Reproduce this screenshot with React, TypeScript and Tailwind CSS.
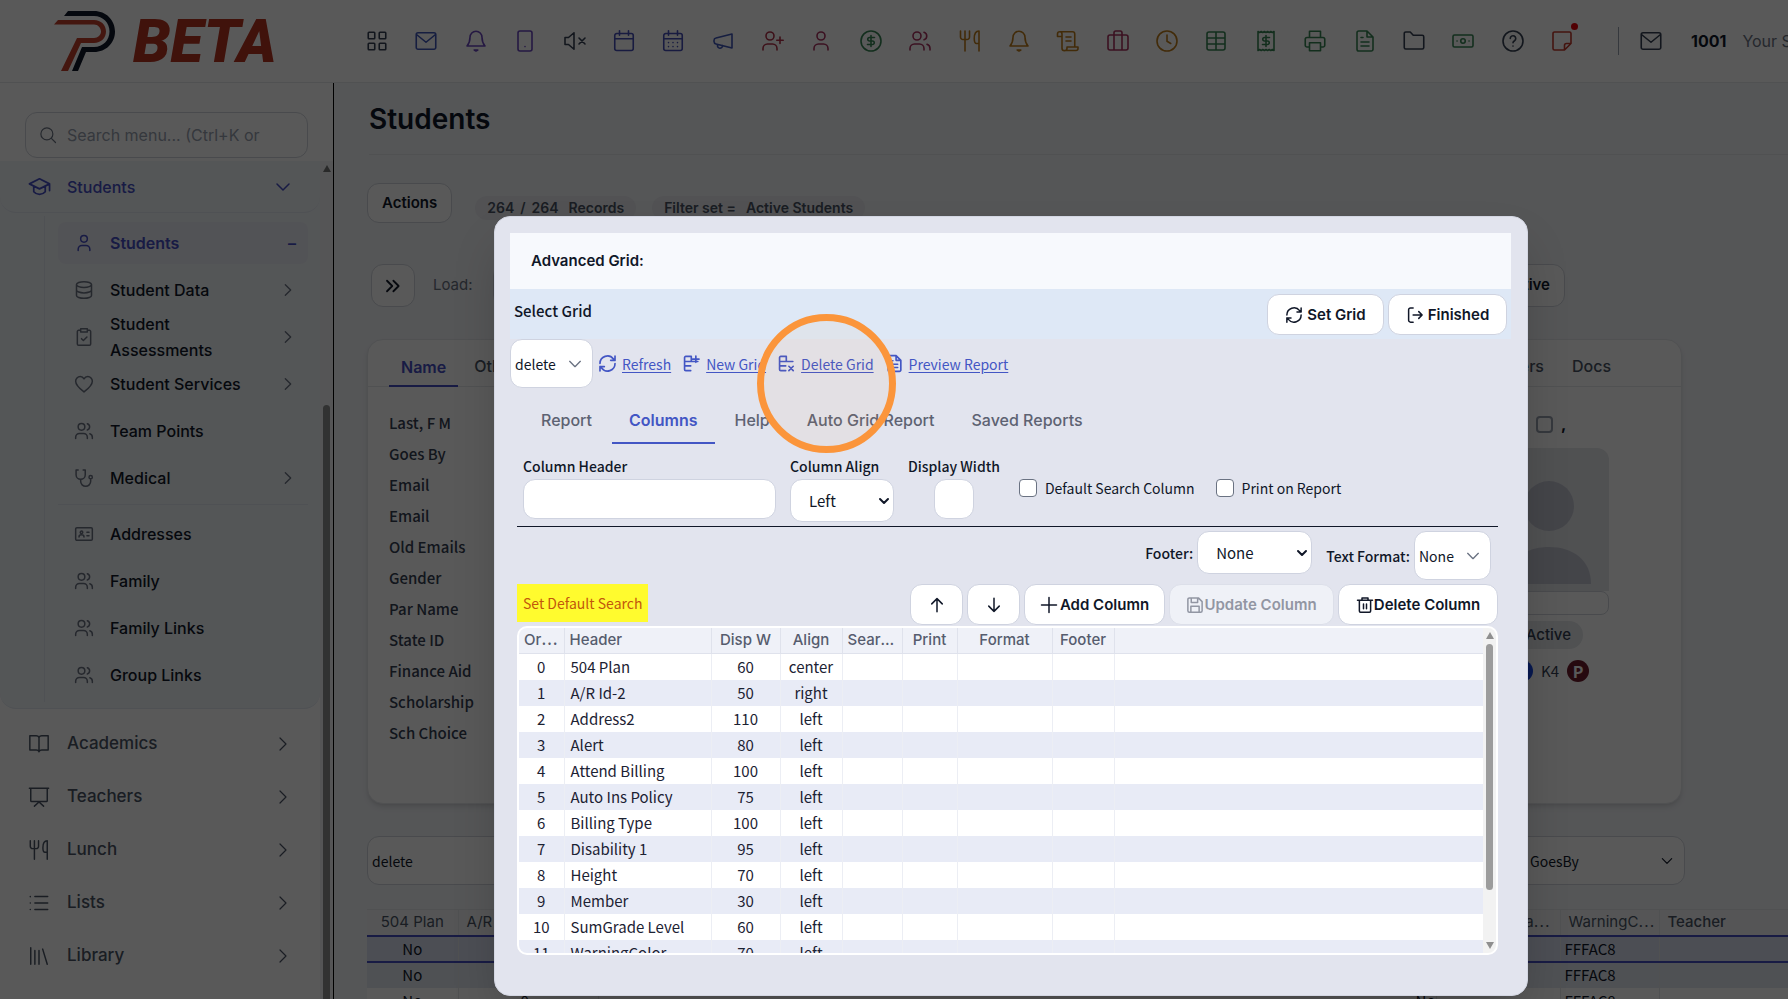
import { useState, type ReactNode } from 'react';

const SANS = "font-['Inter','Noto_Sans_CJK_SC',sans-serif]";
const SOURCE = "font-['Noto_Sans_CJK_SC','Noto_Sans',sans-serif]";

const dollar = 'M15.5 8.5h-5a1.75 1.75 0 0 0 0 3.5h3a1.75 1.75 0 0 1 0 3.5h-5M12 6.5v11';
const userBody = 'M5 21v-1.5a4.5 4.5 0 0 1 4.5-4.5h5a4.5 4.5 0 0 1 4.5 4.5V21';
const bell = 'M12 2.25A6 6 0 0 1 18 8.2c0 4.6 1.3 6.8 3 8.8H3c1.7-2 3-4.2 3-8.8a6 6 0 0 1 6-5.95zM10.2 21h3.6l-1.8 1z';
const calendar = 'M4.75 4.5h14.5a2 2 0 0 1 2 2v13a2 2 0 0 1-2 2H4.75a2 2 0 0 1-2-2v-13a2 2 0 0 1 2-2zM2.75 9.75h18.5M7.5 1.75v4.5M16.5 1.75v4.5';
const rows = 'M4.75 3h7v6.5M4.75 3a1.5 1.5 0 0 0-1.5 1.5v15a1.5 1.5 0 0 0 1.5 1.5H11M3.25 9.5H20M3.25 15H11';

const icons: Record<string, string> = {
  grid: 'M4 3.25h5a.75.75 0 0 1 .75.75v5a.75.75 0 0 1-.75.75H4A.75.75 0 0 1 3.25 9V4A.75.75 0 0 1 4 3.25zM15 3.25h5a.75.75 0 0 1 .75.75v5a.75.75 0 0 1-.75.75h-5a.75.75 0 0 1-.75-.75V4a.75.75 0 0 1 .75-.75zM4 14.25h5a.75.75 0 0 1 .75.75v5a.75.75 0 0 1-.75.75H4a.75.75 0 0 1-.75-.75v-5a.75.75 0 0 1 .75-.75zM15 14.25h5a.75.75 0 0 1 .75.75v5a.75.75 0 0 1-.75.75h-5a.75.75 0 0 1-.75-.75v-5a.75.75 0 0 1 .75-.75z',
  mail: 'M4 3.75h16a1.75 1.75 0 0 1 1.75 1.75v13A1.75 1.75 0 0 1 20 20.25H4a1.75 1.75 0 0 1-1.75-1.75v-13A1.75 1.75 0 0 1 4 3.75zM2.5 5.5l9.5 7.75L21.5 5.5',
  bell,
  phone: 'M7 2h10a2 2 0 0 1 2 2v16a2 2 0 0 1-2 2H7a2 2 0 0 1-2-2V4a2 2 0 0 1 2-2zM12 17.5v.1',
  mute: 'M2 8.5h3.5L11 3.75v16.5L5.5 15.5H2zM16 9l6 6M22 9l-6 6',
  calendar,
  calendarDays: calendar + 'M7.5 13.5v.1M12 13.5v.1M16.5 13.5v.1M7.5 17.5v.1M12 17.5v.1M16.5 17.5v.1',
  megaphone: 'M21 5v14L5 15a2.5 2.5 0 0 1-2-2.4v-1.2A2.5 2.5 0 0 1 5 9zM6.5 15.5v1a2.5 2.5 0 0 0 5 .5v-.4',
  userPlus: 'M14 7a4 4 0 1 1-8 0 4 4 0 0 1 8 0zM3 21v-1.5a4.5 4.5 0 0 1 4.5-4.5h5a4.5 4.5 0 0 1 4.5 4.5V21M20 8v6.5M16.75 11.25h6.5',
  user: 'M16 7a4 4 0 1 1-8 0 4 4 0 0 1 8 0z' + userBody,
  dollarCircle: 'M22 12a10 10 0 1 1-20 0 10 10 0 0 1 20 0z' + dollar,
  users: 'M13 7a4 4 0 1 1-8 0 4 4 0 0 1 8 0zM2 21v-1.5a4.5 4.5 0 0 1 4.5-4.5h5a4.5 4.5 0 0 1 4.5 4.5V21M16 3.2a4 4 0 0 1 0 7.6M19 15.3a4.5 4.5 0 0 1 3 4.2V21',
  utensils: 'M2.5 2v6a2.5 2.5 0 0 0 2.5 2.5h4A2.5 2.5 0 0 0 11.5 8V2M7 2v20M21 22V2c-3 0-4.75 3-4.75 7.5 0 3.5.75 5 2.25 5H21',
  scroll: 'M8.5 21.5H20a2 2 0 0 0 2-2V18H11v1.25a2.5 2.5 0 0 1-5 0V5a2.25 2.25 0 1 0-4.5 0v2.5H6M3.75 2.75H16.5A2.25 2.25 0 0 1 18.75 5v13M10 8h5M10 12h5',
  suitcase: 'M4 6h16a2 2 0 0 1 2 2v11a2 2 0 0 1-2 2H4a2 2 0 0 1-2-2V8a2 2 0 0 1 2-2zM8 21V3.75A1.75 1.75 0 0 1 9.75 2h4.5A1.75 1.75 0 0 1 16 3.75V21',
  clock: 'M22 12a10 10 0 1 1-20 0 10 10 0 0 1 20 0zM12 6v6.25l3.75 2.25',
  sheet: 'M5 3h14a2 2 0 0 1 2 2v14a2 2 0 0 1-2 2H5a2 2 0 0 1-2-2V5a2 2 0 0 1 2-2zM3 9h18M3 15h18M12 3v18',
  receipt: 'M4 2.5l1.6 1 1.6-1 1.6 1 1.6-1 1.6 1 1.6-1 1.6 1 1.6-1 1.6 1 1.6-1v19l-1.6-1-1.6 1-1.6-1-1.6 1-1.6-1-1.6 1-1.6-1-1.6 1-1.6-1-1.6 1z' + dollar,
  printer: 'M6.5 8.5V2.25h11V8.5M6.5 18H4a1.75 1.75 0 0 1-1.75-1.75v-6A1.75 1.75 0 0 1 4 8.5h16a1.75 1.75 0 0 1 1.75 1.75v6A1.75 1.75 0 0 1 20 18h-2.5M6.5 13.75h11v8h-11z',
  file: 'M14 2H5.75A1.75 1.75 0 0 0 4 3.75v16.5C4 21.2 4.8 22 5.75 22h12.5A1.75 1.75 0 0 0 20 20.25V8zM14 2v6h6M8 8.5h2M8 13h8M8 17h8',
  folder: 'M2.25 4.5A1.5 1.5 0 0 1 3.75 3h4.5l3 3.25h9a1.5 1.5 0 0 1 1.5 1.5V18.5a1.5 1.5 0 0 1-1.5 1.5H3.75a1.5 1.5 0 0 1-1.5-1.5z',
  cash: 'M3.5 6h17A1.5 1.5 0 0 1 22 7.5v9a1.5 1.5 0 0 1-1.5 1.5h-17A1.5 1.5 0 0 1 2 16.5v-9A1.5 1.5 0 0 1 3.5 6zM14.25 12a2.25 2.25 0 1 1-4.5 0 2.25 2.25 0 0 1 4.5 0zM6 12h.1M18 12h.1',
  help: 'M22 12a10 10 0 1 1-20 0 10 10 0 0 1 20 0zM9.25 9.5a2.75 2.75 0 1 1 4.3 2.25C12.5 12.4 12 12.75 12 13.75M12 17v.1',
  note: 'M4.5 3h15A1.5 1.5 0 0 1 21 4.5V14.5L14.5 21h-10A1.5 1.5 0 0 1 3 19.5v-15A1.5 1.5 0 0 1 4.5 3zM14.5 21v-4.5a2 2 0 0 1 2-2H21',
  search: 'M18.5 10.5a8 8 0 1 1-16 0 8 8 0 0 1 16 0zM16.5 16.5L22 22',
  cap: 'M12 4L1.5 9.25 12 14.5l10.5-5.25zM22.5 9.25v7M6 12v5.5c1.5 1.75 3.6 2.75 6 2.75s4.5-1 6-2.75V12',
  database: 'M21 5.5c0 1.9-4 3.5-9 3.5S3 7.4 3 5.5 7 2 12 2s9 1.6 9 3.5zM3 5.5v13C3 20.4 7 22 12 22s9-1.6 9-3.5v-13M3 12c0 1.9 4 3.5 9 3.5s9-1.6 9-3.5',
  clipboard: 'M8 4H5.5A1.5 1.5 0 0 0 4 5.5v15A1.5 1.5 0 0 0 5.5 22h13a1.5 1.5 0 0 0 1.5-1.5v-15A1.5 1.5 0 0 0 18.5 4H16M8 2h8v4H8zM9 14l2.25 2.25L15.5 12',
  heart: 'M12 21.5C6 17 2 13.2 2 8.7A5.6 5.6 0 0 1 7.5 3C9.5 3 11 4 12 5.75 13 4 14.5 3 16.5 3A5.6 5.6 0 0 1 22 8.7c0 4.5-4 8.3-10 12.8z',
  stethoscope: 'M5 2.5H2.5V8a5.5 5.5 0 0 0 11 0V2.5H11M8 13.5V16a6 6 0 0 0 12 0v-3M22 11a2 2 0 1 1-4 0 2 2 0 0 1 4 0z',
  idCard: 'M3.5 4.5h17A1.5 1.5 0 0 1 22 6v12a1.5 1.5 0 0 1-1.5 1.5h-17A1.5 1.5 0 0 1 2 18V6a1.5 1.5 0 0 1 1.5-1.5zM10.5 10a1.5 1.5 0 1 1-3 0 1.5 1.5 0 0 1 3 0zM6 15.5c0-1.5 1.2-2.5 3-2.5s3 1 3 2.5M15.5 10H18M15.5 14H18',
  book: 'M12 5v15M12 5c-.5-1.2-1.5-2-3-2H2v15.5h7c1.5 0 2.5.5 3 2 .5-1.5 1.5-2 3-2h7V3h-7c-1.5 0-2.5.8-3 2z',
  presentation: 'M1.5 2.5h21M3 2.5V16a1 1 0 0 0 1 1h16a1 1 0 0 0 1-1V2.5M7 22l5-4.5 5 4.5',
  list: 'M2.5 5v.1M2.5 12v.1M2.5 19v.1M7.5 5h14M7.5 12h14M7.5 19h14',
  library: 'M3 3v18M7.5 6v15M12 6v15M16 4.5L21 21',
  refresh: 'M2.5 12a9.5 9.5 0 0 1 17-5.8L21.5 8M21.5 2.5V8H16M21.5 12a9.5 9.5 0 0 1-17 5.8L2.5 16M2.5 21.5V16H8',
  rowsAdd: rows + 'M17.5 2.5v8M13.5 6.5h8',
  rowsDelete: rows + 'M15 15.5l5.5 5.5M20.5 15.5L15 21',
  exit: 'M9.5 2.5H6A2.5 2.5 0 0 0 3.5 5v14A2.5 2.5 0 0 0 6 21.5h3.5M9.5 12h12M17 7.5l4.5 4.5-4.5 4.5',
  up: 'M12 21V3.5M5 10.5l7-7 7 7',
  down: 'M12 3v17.5M5 13.5l7 7 7-7',
  plus: 'M12 2v20M2 12h20',
  save: 'M4.5 2.5h12l5 5v12a2 2 0 0 1-2 2h-15a2 2 0 0 1-2-2v-15a2 2 0 0 1 2-2zM7 2.5v6h8.5v-6M6.5 21.5v-8h11v8',
  trash: 'M2 5.5h20M8 5.5V2.5h8v3M4.5 5.5V20A1.5 1.5 0 0 0 6 21.5h12a1.5 1.5 0 0 0 1.5-1.5V5.5M10 10.5v6.5M14 10.5v6.5',
  chevronDown: 'M4 8l8 8 8-8',
  chevronRight: 'M8 4l8 8-8 8',
  double: 'M4 5l7 7-7 7M12.5 5l7 7-7 7',
};

interface IconProps {
  name: string;
  className?: string;
  weight?: number;
}

const Icon = ({ name, className = 'size-6', weight = 1.6 }: IconProps) => (
  <svg className={`shrink-0 ${className}`} viewBox="0 0 24 24" fill="none" stroke="currentColor" strokeWidth={weight} strokeLinecap="round" strokeLinejoin="round" aria-hidden="true">
    <path d={icons[name]} />
  </svg>
);

const toolbar = [
  ['grid', 'text-gray-700'],
  ['mail', 'text-[#3f56b8]'],
  ['bell', 'text-[#6a47bd]'],
  ['phone', 'text-[#6a47bd]'],
  ['mute', 'text-gray-700'],
  ['calendar', 'text-[#454eb8]'],
  ['calendarDays', 'text-[#454eb8]'],
  ['megaphone', 'text-[#3f56b8]'],
  ['userPlus', 'text-[#b03048]'],
  ['user', 'text-[#a8325f]'],
  ['dollarCircle', 'text-[#388555]'],
  ['users', 'text-[#a8325f]'],
  ['utensils', 'text-[#bd7c1c]'],
  ['bell', 'text-[#bd7c1c]'],
  ['scroll', 'text-[#bd7c1c]'],
  ['suitcase', 'text-[#a8325f]'],
  ['clock', 'text-[#bd7c1c]'],
  ['sheet', 'text-[#388555]'],
  ['receipt', 'text-[#388555]'],
  ['printer', 'text-[#388555]'],
  ['file', 'text-[#388555]'],
  ['folder', 'text-gray-700'],
  ['cash', 'text-[#388555]'],
  ['help', 'text-gray-700'],
  ['note', 'text-[#c23a2c]'],
];

const studentMenu = [
  { icon: 'database', label: 'Student Data', more: true },
  { icon: 'clipboard', label: 'Student Assessments', more: true },
  { icon: 'heart', label: 'Student Services', more: true },
  { icon: 'users', label: 'Team Points', more: false },
  { icon: 'stethoscope', label: 'Medical', more: true },
];

const linkMenu = [
  { icon: 'idCard', label: 'Addresses', more: false },
  { icon: 'users', label: 'Family', more: false },
  { icon: 'users', label: 'Family Links', more: false },
  { icon: 'users', label: 'Group Links', more: false },
];

const mainMenu = [
  ['book', 'Academics'],
  ['presentation', 'Teachers'],
  ['utensils', 'Lunch'],
  ['list', 'Lists'],
  ['library', 'Library'],
];

const fields = ['Last, F M', 'Goes By', 'Email', 'Email', 'Old Emails', 'Gender', 'Par Name', 'State ID', 'Finance Aid', 'Scholarship', 'Sch Choice'];

const gridRows = [
  ['504 Plan', 60, 'center'],
  ['A/R Id-2', 50, 'right'],
  ['Address2', 110, 'left'],
  ['Alert', 80, 'left'],
  ['Attend Billing', 100, 'left'],
  ['Auto Ins Policy', 75, 'left'],
  ['Billing Type', 100, 'left'],
  ['Disability 1', 95, 'left'],
  ['Height', 70, 'left'],
  ['Member', 30, 'left'],
  ['SumGrade Level', 60, 'left'],
  ['WarningColor', 70, 'left'],
];

// shortened column title, with the dots at mid height
const Cut = ({ children }: { children: string }) => (
  <>{children}<span className={`${SOURCE} leading-none`}>…</span></>
);

const SubItem = ({ icon, label, more }: { icon: string; label: string; more: boolean }) => (
  <a href="#" className="flex h-[42px] items-center pr-3 pl-4 text-base leading-[26px] font-medium text-gray-900">
    <Icon name={icon} className="size-5 text-gray-500" weight={1.8} />
    <span className="ml-4 w-[140px]">{label}</span>
    {more && <Icon name="chevronRight" className="ml-auto size-4 text-gray-500" weight={2} />}
  </a>
);

const Header = () => (
  <header className="flex h-[83px] shrink-0 items-center border-b border-gray-200 bg-white">
    <div className="flex w-[365px] shrink-0 items-center pl-[54px]">
      <svg className="h-[60px] w-[62px]" viewBox="0 0 62 60" aria-hidden="true">
        <path d="M14 0h26c12 0 21 9 21 20.5S52 41 40 41h-8L24 60h-6l10-24h12c9 0 15.500-7 15.500-15.500S49 5 40 5H10z" fill="#0f172a" />
        <path d="M4 9h36c7 0 12 5 12 11.500S47 32 40 32H27L14 60H7l16-33h17c4 0 7-3 7-6.500S44 13.500 40 13.500H0z" fill="#c2412d" />
      </svg>
      <span className="ml-[17px] pt-0.5 font-['Roboto',sans-serif] text-[60px] leading-[60px] font-black text-[#b83422] italic">BETA</span>
    </div>
    <nav aria-label="Shortcuts" className="flex flex-1 items-center justify-between">
      {toolbar.map(([name, color], i) => (
        <button key={i} type="button" aria-label={name} className={`relative ${color}`}>
          <Icon name={name} />
          {name === 'note' && <span className="absolute -top-1.5 -right-1 size-[7px] rounded-full bg-red-600" />}
        </button>
      ))}
    </nav>
    <div className="flex w-[214px] shrink-0 items-center overflow-hidden pl-11">
      <div className="h-7 w-px shrink-0 bg-gray-400" />
      <Icon name="mail" className="ml-5 size-6 text-gray-700" />
      <span className="ml-7 text-base font-bold">1001</span>
      <span className="ml-4 text-base whitespace-nowrap text-gray-500">Your School</span>
    </div>
  </header>
);

const Sidebar = () => (
  <aside className="flex w-[334px] shrink-0 flex-col border-r border-black bg-white">
    <div className="px-[25px] pt-[29px] pb-[3px]">
      <label className="flex h-[46px] items-center rounded-xl border border-gray-300 pl-[13px] text-gray-500">
        <Icon name="search" className="size-[18px]" />
        <input aria-label="Search menu" className="ml-2.5 w-[215px] text-base placeholder:text-gray-400" placeholder="Search menu... (Ctrl+K or" />
      </label>
    </div>
    <div className="flex min-h-0 flex-1">
      <div className="min-w-0 flex-1 overflow-hidden">
        <div className="rounded-b-2xl border-b border-slate-200 bg-slate-100 pb-1.5">
          <a href="#" className="flex h-[52px] items-center rounded-b-2xl border-b border-slate-200 pr-7 pl-7 text-base font-medium text-[#454ec4]">
            <Icon name="cap" className="size-[23px]" weight={1.8} />
            <span className="ml-4">Students</span>
            <Icon name="chevronDown" className="ml-auto size-[18px]" weight={2} />
          </a>
          <div className="mt-[3px] ml-11 border-l border-slate-200 pt-1.5 pr-3 pb-1.5 pl-[13px]">
            <div className="flex flex-col gap-[5px]">
              <a href="#" className="flex h-[42px] items-center rounded-lg bg-[#ebedf6] pr-3 pl-4 text-base font-semibold text-[#454ec4]">
                <Icon name="user" className="size-5" weight={1.8} />
                <span className="ml-4">Students</span>
                <span className="ml-auto">–</span>
              </a>
              {studentMenu.map((item) => <SubItem key={item.label} {...item} />)}
            </div>
            <hr className="mt-[5px] mb-2 border-slate-200" />
            <div className="flex flex-col gap-[5px]">
              {linkMenu.map((item) => <SubItem key={item.label} {...item} />)}
            </div>
          </div>
        </div>
        <div className="pt-2">
          {mainMenu.map(([icon, label]) => (
            <a key={label} href="#" className="flex h-[53px] items-center pr-7 pl-7 text-[17px] font-medium text-gray-600">
              <Icon name={icon} className="size-[22px]" />
              <span className="ml-[17px]">{label}</span>
              <Icon name="chevronRight" className="ml-auto size-[18px]" />
            </a>
          ))}
        </div>
      </div>
      <div className="flex w-[13px] flex-col items-center bg-gray-100">
        <svg className="mt-1 size-2" viewBox="0 0 8 8" aria-hidden="true"><path d="M4 0l4 7H0z" fill="#777" /></svg>
        <div className="mt-[232px] w-[7px] flex-1 rounded-t-full bg-[#8f8f8f]" />
      </div>
    </div>
  </aside>
);

const pageTable = 'border-r border-gray-200 font-normal';

const StudentsPage = () => (
  <main className="min-w-0 flex-1 overflow-hidden bg-[#f3f5f9] pl-[33px] text-gray-900">
    <h1 className="ml-0.5 flex h-[72px] items-center border-b border-gray-200 text-[28px] font-semibold">Students</h1>
    <div className="mt-7 flex items-start">
      <button type="button" className="h-10 rounded-xl border border-gray-300 bg-white px-3.5 text-[15px] font-semibold">Actions</button>
      <span className="mt-[13px] ml-[23px] flex h-6 gap-2.5 rounded-full bg-gray-200/70 px-3 text-sm leading-6 font-semibold text-gray-600"><span className="flex gap-1.5"><span>264</span><span>/</span><span>264</span></span><span>Records</span></span>
      <span className="mt-[13px] ml-4 flex h-6 gap-2.5 rounded-full bg-gray-200/70 px-3 text-sm leading-6 font-semibold text-gray-600"><span>Filter set =</span><span>Active Students</span></span>
    </div>
    <div className="mt-[41px] ml-1 flex w-[1194px] items-center">
      <button type="button" aria-label="Expand" className="flex h-[43px] w-11 items-center justify-center rounded-xl border border-gray-300 bg-white"><Icon name="double" className="size-[18px]" weight={2.4} /></button>
      <span className="ml-[18px] text-[15px] text-gray-500">Load:</span>
      <button type="button" className="ml-5 h-[43px] w-40 rounded-xl border border-gray-300 bg-white" aria-label="Load" />
      <button type="button" className="ml-auto h-[43px] rounded-xl border border-gray-300 bg-white px-3.5 text-[15px] font-semibold">Active</button>
    </div>
    <section className="mt-8 mr-[106px] h-[465px] rounded-2xl border border-gray-200 bg-white shadow-md">
      <div className="flex h-[47px] items-end border-b border-gray-200 pr-[70px] pl-[21px] text-base font-medium text-gray-600">
        <a href="#" className="-mb-px h-10 border-b-2 border-[#454ec4] px-3 leading-[40px] font-semibold text-[#454ec4]">Name</a>
        <a href="#" className="ml-4 h-10 leading-[40px]">Other</a>
        <a href="#" className="ml-auto h-10 leading-[40px]">Users</a>
        <a href="#" className="ml-7 h-10 leading-[40px]">Docs</a>
      </div>
      <div className="flex justify-between pr-[72px] pl-[21px]">
        <ul className={`${SOURCE} pt-5 text-[15px] leading-[31px] font-medium text-gray-700`}>
          {fields.map((f, i) => <li key={i}>{f}</li>)}
        </ul>
        <div className="flex w-[121px] flex-col pt-[27px]">
          <label className="ml-12 flex h-5 items-center gap-2 font-bold">
            <input type="checkbox" className="size-[17px] appearance-none rounded border-2 border-gray-400" />,
          </label>
          <svg className="mt-3.5 h-[143px] w-[121px] rounded-t-xl bg-gray-200" viewBox="0 0 121 143" aria-hidden="true">
            <circle cx="61" cy="58" r="25" fill="#c3c6d2" />
            <path d="M19 136c0-24 18-37 42-37s42 13 42 37z" fill="#c3c6d2" />
          </svg>
          <input aria-label="Photo" className="h-6 rounded-lg border border-gray-300 bg-white" />
          <span className="mt-1.5 ml-6 flex h-7 w-[71px] items-center justify-end rounded-full bg-gray-200 pr-3 text-[15px] font-medium text-gray-700">Active</span>
          <span className={`${SOURCE} mt-2.5 ml-[23px] flex items-center gap-2 text-[15px] leading-6 text-gray-700`}>
            <span className="size-[22px] rounded-full bg-blue-700" />K4
            <span className="size-[22px] rounded-full bg-[#6d1a2c] text-center text-base leading-[22px] font-bold text-white">P</span>
          </span>
        </div>
      </div>
    </section>
    <div className={`${SOURCE} mt-8 mr-[103px] flex gap-4 text-sm`}>
      <button type="button" className="h-[49px] flex-1 rounded-xl border border-gray-300 bg-white pl-1 text-left">delete</button>
      <button type="button" className="flex h-[49px] w-[172px] items-center justify-between rounded-xl border border-gray-300 bg-white pr-2.5 pl-4">GoesBy<Icon name="chevronDown" className="size-3.5" weight={2} /></button>
    </div>
    <table className={`${SOURCE} mt-6 w-full table-fixed border-t border-gray-200 bg-white text-left text-[15px] leading-[24px] text-gray-900`}>
      <colgroup>
        <col className="w-[91px]" /><col className="w-[140px]" /><col /><col className="w-[124px]" /><col className="w-[99px]" /><col className="w-[129px]" />
      </colgroup>
      <thead>
        <tr className={`${SANS} h-[26px] bg-gray-100 text-[15px] text-gray-600`}>
          <th className={`${pageTable} text-center font-medium`}>504 Plan</th>
          <th className={`${pageTable} pl-2 font-medium`}>A/R Id-2</th>
          <th className={pageTable} />
          <th className={`${pageTable} pr-2.5 text-right font-medium`}><Cut>Da</Cut></th>
          <th className={`${pageTable} pl-2 font-medium whitespace-nowrap`}><Cut>WarningC</Cut></th>
          <th className="pl-2 font-medium">Teacher</th>
        </tr>
      </thead>
      <tbody>
        <tr className="h-[26px] border-y-2 border-[#454ec4] bg-[#d9def0]">
          <td className={`${pageTable} text-center`}>No</td><td className={pageTable} /><td className={pageTable} /><td className={pageTable} /><td className={`${pageTable} pl-1`}>FFFAC8</td><td />
        </tr>
        <tr className="h-[26px] bg-[#e3e7f1]">
          <td className={`${pageTable} text-center`}>No</td><td className={pageTable} /><td className={pageTable} /><td className={pageTable} /><td className={`${pageTable} pl-1`}>FFFAC8</td><td />
        </tr>
        <tr className="h-[26px]">
          <td className={`${pageTable} text-center`}>No</td><td className={`${pageTable} pl-[62px]`}>0</td><td className={`${pageTable} text-right`}>No</td><td className={pageTable} /><td className={`${pageTable} pl-1`}>FFFAC8</td><td />
        </tr>
      </tbody>
    </table>
  </main>
);

const box = 'appearance-none rounded-xl border border-[#cfd3e0] bg-white text-[#101728]';

interface SelectProps {
  id: string;
  value: string;
  size: string;
  bold?: boolean;
}

const Select = ({ id, value, size, bold = false }: SelectProps) => (
  <span className="relative flex">
    <select id={id} defaultValue={value} aria-label={id} className={`${box} ${size}`}>
      <option>{value}</option>
    </select>
    <span className={`pointer-events-none absolute inset-y-0 flex items-center ${bold ? 'right-1' : 'right-2.5 text-gray-500'}`}>
      <Icon name="chevronDown" className={bold ? 'size-3' : 'size-4'} weight={bold ? 4 : 2} />
    </span>
  </span>
);

const ActionButton = ({ icon, size, disabled = false, children }: { icon: string; size: string; disabled?: boolean; children?: ReactNode }) => (
  <button type="button" disabled={disabled} aria-label={children ? undefined : icon} className={`${size} ${disabled ? 'border-[#dcdfe9] bg-[#eff1f7] text-[#9296a3]' : 'border-[#cfd3e0] bg-white text-[#101728]'} flex items-center justify-center rounded-xl border text-[15px] font-semibold whitespace-nowrap`}>
    <Icon name={icon} className="size-[18px]" weight={2} />
    {children}
  </button>
);

const GridLink = ({ icon, children }: { icon: string; children: ReactNode }) => (
  <a href="#" className="flex items-center gap-[5px] text-[#4356c4]">
    <Icon name={icon} className="size-[19px]" weight={2.1} />
    <span className="underline underline-offset-2">{children}</span>
  </a>
);

const th = 'truncate border-r border-[#dfe2ec] px-[5px]';
const td = 'border-r border-[#eceef4] px-1';

const ColumnsTable = () => (
  <div className="flex h-[329px] overflow-hidden rounded-[10px] border-2 border-white bg-white">
    <div className="min-w-0 flex-1 overflow-hidden">
      <table className={`${SOURCE} w-full table-fixed text-center text-[15px] leading-[26px] text-[#1c2233]`}>
        <colgroup>
          <col className="w-[45px]" /><col className="w-[147px]" /><col className="w-[69px]" /><col className="w-[62px]" /><col className="w-[60px]" /><col className="w-[55px]" /><col className="w-[95px]" /><col className="w-[62px]" /><col />
        </colgroup>
        <thead>
          <tr className={`${SANS} h-[25px] border-b border-[#dfe2ec] bg-[#eff1f8] text-[15px] leading-6 text-[#565c6e] [&>th]:font-medium`}>
            <th className={`${th} text-left`}><Cut>Or</Cut></th>
            <th className={`${th} text-left`}>Header</th>
            <th className={th}>Disp W</th>
            <th className={th}>Align</th>
            <th className={th}><Cut>Sear</Cut></th>
            <th className={th}>Print</th>
            <th className={th}>Format</th>
            <th className={th}>Footer</th>
            <th />
          </tr>
        </thead>
        <tbody>
          {gridRows.map(([header, width, align], i) => (
            <tr key={header} className="h-[26px] even:bg-[#e8ebf6]">
              <td className={td}>{i}</td>
              <td className={`${td} pl-1.5 text-left`}>{header}</td>
              <td className={td}>{width}</td>
              <td className={td}>{align}</td>
              <td className={td} />
              <td className={td} />
              <td className={td} />
              <td className={td} />
              <td />
            </tr>
          ))}
        </tbody>
      </table>
    </div>
    <div className="flex w-[13px] flex-col items-center bg-[#f2f2f2] py-1">
      <svg className="size-2" viewBox="0 0 8 8" aria-hidden="true"><path d="M4 0l4 7H0z" fill="#8f8f8f" /></svg>
      <div className="mt-1 h-[246px] w-[7px] rounded-full bg-[#9c9c9c]" />
      <svg className="mt-auto size-2" viewBox="0 0 8 8" aria-hidden="true"><path d="M4 8L0 1h8z" fill="#8f8f8f" /></svg>
    </div>
  </div>
);

const tabs = ['Report', 'Columns', 'Help', 'Auto Grid Report', 'Saved Reports'];

const AdvancedGridDialog = () => {
  const [tab, setTab] = useState('Columns');

  return (
    <div role="dialog" aria-label="Advanced Grid" className={`${SOURCE} mt-[216px] mr-[260px] ml-[494px] h-[780px] flex-1 rounded-2xl border border-[#d3d6e2] bg-[#e2e4ee] pt-4 pr-4 pl-[15px] text-sm leading-5 text-[#101728] shadow-2xl`}>
      <h2 className={`${SANS} flex h-14 items-center bg-[#f7f9fd] pl-[21px] text-[15px] font-semibold`}>Advanced Grid:</h2>
      <div className={`${SANS} flex h-[50px] items-start gap-1 bg-[#dee8f6] pt-[5px] pr-1`}>
        <span className={`${SOURCE} mt-[7px] mr-auto pl-1 text-[15px] font-medium`}>Select Grid</span>
        <ActionButton icon="refresh" size="h-[41px] w-[117px] gap-1"><span>Set Grid</span></ActionButton>
        <ActionButton icon="exit" size="h-[41px] w-[119px] gap-1"><span>Finished</span></ActionButton>
      </div>
      <div className="flex h-[49px] items-center">
        <Select id="Grid" value="delete" size="h-[49px] w-[83px] pl-1" />
        <div className="ml-[5px] flex items-center gap-[11px]">
          <GridLink icon="refresh">Refresh</GridLink>
          <GridLink icon="rowsAdd">New Grid</GridLink>
          <GridLink icon="rowsDelete">Delete Grid</GridLink>
          <GridLink icon="file">Preview Report</GridLink>
        </div>
      </div>
      <div role="tablist" className={`${SANS} mt-2.5 ml-3.5 flex gap-[3px] text-base`}>
        {tabs.map((name) => (
          <button key={name} type="button" role="tab" aria-selected={tab === name} onClick={() => setTab(name)} className={`h-[46px] border-b-2 px-[17px] ${tab === name ? 'border-[#4356c4] font-semibold text-[#4356c4]' : 'border-transparent font-medium text-[#5d6272]'}`}>
            {name}
          </button>
        ))}
      </div>
      <div className="pr-[13px] pl-[7px]">
        <div className="mt-3 flex h-[71px] items-start border-b border-[#101728] pl-1.5 font-medium">
          <label className="flex w-[253px] flex-col gap-[3px]">Column Header<input className={`${box} h-10 px-3`} /></label>
          <label className="ml-3.5 flex w-[104px] flex-col gap-[3px]">Column Align<Select id="Align" value="Left" size="h-[43px] w-full pl-[18px] text-[15px] font-normal" bold /></label>
          <label className="ml-3.5 flex flex-col items-center gap-[3px]">Display Width<input className={`${box} h-10 w-10 px-2`} /></label>
          <label className="mt-[22px] ml-[19px] flex items-center gap-2 font-normal"><input type="checkbox" className="size-[18px] appearance-none rounded border border-gray-500 bg-white" />Default Search Column</label>
          <label className="mt-[22px] ml-[21px] flex items-center gap-2 font-normal"><input type="checkbox" className="size-[18px] appearance-none rounded border border-gray-500 bg-white" />Print on Report</label>
        </div>
        <div className="mt-1 flex h-[49px] items-start justify-end pr-[7px] font-medium">
          <label className="flex items-center gap-1">Footer:<Select id="Footer" value="None" size="h-[43px] w-[115px] pl-[18px] text-[15px] font-normal" bold /></label>
          <label className="ml-3.5 flex items-center gap-1">Text Format:<Select id="Format" value="None" size="h-[49px] w-[77px] pl-1 font-normal" /></label>
        </div>
        <div className={`${SANS} mt-1 mb-px flex gap-1`}>
          <button type="button" className={`${SOURCE} mr-auto h-[38px] bg-[#fffb2e] px-1.5 text-[#c2570c]`}>Set Default Search</button>
          <ActionButton icon="up" size="h-[41px] w-[53px]" />
          <ActionButton icon="down" size="h-[41px] w-[53px]" />
          <ActionButton icon="plus" size="h-[41px] w-[141px] gap-0.5">Add Column</ActionButton>
          <ActionButton icon="save" size="h-[41px] w-[165px]" disabled>Update Column</ActionButton>
          <ActionButton icon="trash" size="h-[41px] w-[160px]">Delete Column</ActionButton>
        </div>
        <ColumnsTable />
      </div>
    </div>
  );
};

export default function App() {
  return (
    <div className={`${SANS} relative flex h-screen flex-col overflow-hidden text-gray-900`}>
      <Header />
      <div className="flex min-h-0 flex-1">
        <Sidebar />
        <StudentsPage />
      </div>
      <div className="absolute inset-0 flex items-start bg-black/65">
        <AdvancedGridDialog />
      </div>
      {/* click highlight */}
      <div className="pointer-events-none absolute top-[314px] left-[757px] size-[139px] rounded-full border-[7px] border-[#fb953b] bg-[#fb953b]/5" />
    </div>
  );
}
